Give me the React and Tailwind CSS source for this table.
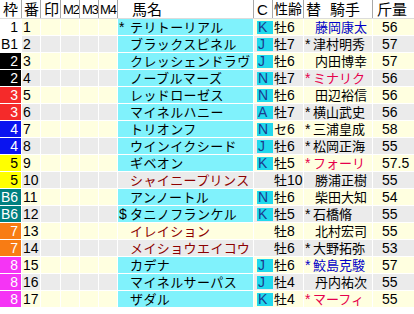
import React from 'react';

const font = { fontFamily: '"Liberation Sans", "Noto Sans CJK JP", sans-serif' };

const frameStyles = {
  '1': 'bg-white text-black',
  'B1': 'bg-white text-black',
  '2': 'bg-black text-white',
  '3': 'bg-[#f52a2a] text-white',
  '4': 'bg-[#0a14f0] text-white',
  '5': 'bg-[#ffff00] text-black',
  'B6': 'bg-[#008080] text-white',
  '7': 'bg-[#f87c14] text-white',
  '8': 'bg-[#f534f5] text-white',
};

const horses = [
  { f: '1', n: 1, m: '*', name: 'テリトーリアル', c: 'K', sex: '牡6', jm: '', j: '藤岡康太', jc: 'blue', w: '56' },
  { f: 'B1', n: 2, m: '', name: 'ブラックスピネル', c: 'J', sex: '牡7', jm: '*', j: '津村明秀', w: '57' },
  { f: '2', n: 3, m: '', name: 'クレッシェンドラヴ', c: 'J', sex: '牡6', jm: '', j: '内田博幸', w: '57' },
  { f: '2', n: 4, m: '', name: 'ノーブルマーズ', c: 'N', sex: '牡7', jm: '*', j: 'ミナリク', jc: 'red', w: '56' },
  { f: '3', n: 5, m: '', name: 'レッドローゼス', c: 'N', sex: '牡6', jm: '', j: '田辺裕信', w: '56' },
  { f: '3', n: 6, m: '', name: 'マイネルハニー', c: 'A', sex: '牡7', jm: '*', j: '横山武史', w: '56' },
  { f: '4', n: 7, m: '', name: 'トリオンフ', c: 'N', sex: 'セ6', jm: '*', j: '三浦皇成', w: '58' },
  { f: '4', n: 8, m: '', name: 'ウインイクシード', c: 'J', sex: '牡6', jm: '*', j: '松岡正海', w: '55' },
  { f: '5', n: 9, m: '', name: 'ギベオン', c: 'K', sex: '牡5', jm: '*', j: 'フォーリ', jc: 'red', w: '57.5' },
  { f: '5', n: 10, m: '', name: 'シャイニープリンス', c: '', sex: '牡10', jm: '', j: '勝浦正樹', w: '55' },
  { f: 'B6', n: 11, m: '', name: 'アンノートル', c: 'N', sex: '牡6', jm: '', j: '柴田大知', w: '54' },
  { f: 'B6', n: 12, m: '$', name: 'タニノフランケル', c: 'K', sex: '牡5', jm: '*', j: '石橋脩', w: '55' },
  { f: '7', n: 13, m: '', name: 'イレイション', c: '', sex: '牡8', jm: '', j: '北村宏司', w: '55' },
  { f: '7', n: 14, m: '', name: 'メイショウエイコウ', c: '', sex: '牡6', jm: '*', j: '大野拓弥', w: '53' },
  { f: '8', n: 15, m: '', name: 'カデナ', c: 'J', sex: '牡6', jm: '*', j: '鮫島克駿', jc: 'blue', w: '57' },
  { f: '8', n: 16, m: '', name: 'マイネルサーパス', c: 'J', sex: '牡4', jm: '', j: '丹内祐次', w: '55' },
  { f: '8', n: 17, m: '', name: 'ザダル', c: 'K', sex: '牡4', jm: '*', j: 'マーフィ', jc: 'red', w: '55' },
];

function HeaderCell({ w, children, className = '' }) {
  return (
    <div className={`${w} h-full flex items-center whitespace-nowrap overflow-hidden border-r border-[#a8a8a8] ${className}`}>
      {children}
    </div>
  );
}

function Row({ h, i }) {
  const rowBg = i % 2 === 0 ? 'bg-[#ffffe0]' : 'bg-[#ebebeb]';
  const hasC = h.c !== '';
  const nameBg = hasC ? 'bg-[#80f2fc] text-black' : `${rowBg} text-[#8c0000]`;
  const jColor =
    h.jc === 'blue' ? 'text-[#0000c8]' : h.jc === 'red' ? 'text-[#e6004c]' : 'text-black';
  return (
    <div className="flex h-[17px] text-[13px] leading-none">
      <div className={`w-[22px] flex items-center justify-end pr-[3px] text-[14px] border-r border-b border-white ${frameStyles[h.f]}`}>
        {h.f}
      </div>
      <div className={`w-[19px] flex items-center pl-[1px] text-[14px] border-r border-b border-white ${rowBg}`}>{h.n}</div>
      <div className={`w-[20px] border-r border-b border-white ${rowBg}`} />
      <div className={`w-[19px] border-r border-b border-white ${rowBg}`} />
      <div className={`w-[19px] border-r border-b border-white ${rowBg}`} />
      <div className={`w-[19px] border-r border-b border-white ${rowBg}`} />
      <div className={`w-[136px] flex items-center border-r border-b border-white ${nameBg}`}>
        <span className="w-[12px] pl-[1px] shrink-0 text-[14px]">{h.m}</span>
        <span className="whitespace-nowrap tracking-[0.4px]">{h.name}</span>
      </div>
      <div className={`w-[19px] flex items-center border-b border-white ${rowBg}`}>
        {hasC && (
          <div className="ml-[3px] w-[16px] h-[13px] bg-[#22d8ec] text-[#1c3c8c] text-[14px] flex items-center pl-[1px]">
            {h.c}
          </div>
        )}
      </div>
      <div className={`w-[31px] flex items-center pl-[1px] border-r border-b border-white whitespace-nowrap ${rowBg}`}>
        {h.sex.slice(0, 1)}
        <span className="text-[14px]">{h.sex.slice(1)}</span>
      </div>
      <div className={`w-[69px] flex items-center pl-[1px] border-r border-b border-white whitespace-nowrap ${rowBg} ${jColor}`}>
        <span className="w-[8px] shrink-0 text-[14px]">{h.jm}</span>
        <span className={h.jm ? '' : 'pl-[2px]'}>{h.j}</span>
      </div>
      <div className={`w-[41px] flex items-center pl-[9px] text-[14px] border-b border-white ${rowBg}`}>{h.w}</div>
    </div>
  );
}

export default function App() {
  return (
    <div className="w-[414px] h-[314px] bg-white text-black overflow-hidden" style={font}>
      <div className="flex h-[19px] text-[15px] leading-none bg-white border-b border-[#dcdcdc]">
        <HeaderCell w="w-[22px]" className="pl-[3px]">枠</HeaderCell>
        <HeaderCell w="w-[19px]" className="pl-[2px]">番</HeaderCell>
        <HeaderCell w="w-[20px]" className="pl-[3px]">印</HeaderCell>
        <HeaderCell w="w-[19px]" className="pl-[2px] text-[13px] tracking-[-1px]">M2</HeaderCell>
        <HeaderCell w="w-[19px]" className="pl-[2px] text-[13px] tracking-[-1px]">M3</HeaderCell>
        <HeaderCell w="w-[19px]" className="pl-[1px] text-[13px] tracking-[-1px]">M4</HeaderCell>
        <HeaderCell w="w-[136px]" className="pl-[14px]">馬名</HeaderCell>
        <HeaderCell w="w-[19px]" className="pl-[3px]">C</HeaderCell>
        <HeaderCell w="w-[31px]" className="pl-[1px] text-[14px]">性齢</HeaderCell>
        <HeaderCell w="w-[69px]" className="pl-[2px] gap-[9px]">
          <span>替</span>
          <span>騎手</span>
        </HeaderCell>
        <div className="w-[41px] h-full flex items-center pl-[4px]">斤量</div>
      </div>
      {horses.map((h, i) => (
        <Row key={h.n} h={h} i={i} />
      ))}
    </div>
  );
}
